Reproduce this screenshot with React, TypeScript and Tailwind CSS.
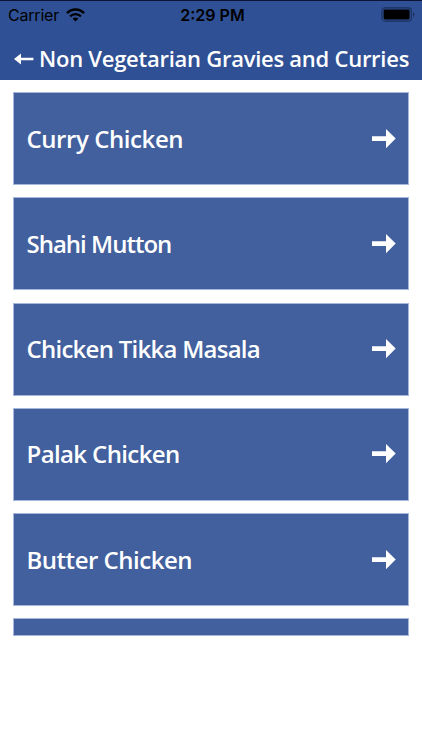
import React from 'react';

interface Dish {
  name: string;
  tracking: string;
}

const dishes: Dish[] = [
  { name: 'Curry Chicken', tracking: 'tracking-[-0.42px]' },
  { name: 'Shahi Mutton', tracking: 'tracking-[-1px]' },
  { name: 'Chicken Tikka Masala', tracking: 'tracking-[-0.74px]' },
  { name: 'Palak Chicken', tracking: 'tracking-[-0.62px]' },
  { name: 'Butter Chicken', tracking: 'tracking-[-0.48px]' },
];

const WifiIcon = () => (
  <svg className="ml-[7px] h-[14px] w-[19px]" viewBox="0 0 19 14" fill="none">
    <path d="M1 5.2C5.8 .4 13.2 .4 18 5.2" stroke="#000" strokeWidth="2.5" />
    <path d="M4.1 8.4C7.2 5.4 11.8 5.4 14.9 8.4" stroke="#000" strokeWidth="2.3" />
    <path d="M6.6 10.8C8.2 9.2 10.8 9.2 12.4 10.8L9.5 13.6Z" fill="#000" />
  </svg>
);

const BatteryIcon = () => (
  <svg className="h-[15px] w-[35px]" viewBox="0 0 35 15" fill="none">
    <rect x="0.9" y="0.9" width="29.4" height="13.2" rx="3.2" stroke="#1a2f5c" strokeWidth="1.1" />
    <rect x="2.6" y="2.6" width="26" height="9.8" rx="1.4" fill="#000" />
    <path d="M32 5.2C33.8 5.8 33.8 9.2 32 9.8Z" fill="#1a2f5c" />
  </svg>
);

const BackArrow = () => (
  <svg className="h-[12px] w-[20px]" viewBox="0 0 20 12" fill="#fff">
    <path d="M0 6L7 .4V4.7H19.4V7.3H7V11.6Z" />
  </svg>
);

const ForwardArrow = () => (
  <svg className="h-[20px] w-[24px]" viewBox="0 0 24 20" fill="#fff">
    <path d="M0 7.2H14V0L23.7 9.6L14 19.2V12H0Z" />
  </svg>
);

const App: React.FC = () => {
  return (
    <div className="h-[750px] w-[422px] overflow-hidden bg-white font-['Open_Sans','Noto_Sans',sans-serif] text-white">
      <header className="h-[80px] border-t border-[#0b1437] bg-[#2f5094]">
        <div className="grid h-[27px] grid-cols-3 items-center pl-[8px] pr-[6px] font-['Inter',sans-serif] text-[16px] leading-[20px] text-black">
          <div className="flex items-center">
            <span className="tracking-[-0.2px]">Carrier</span>
            <WifiIcon />
          </div>
          <span className="pl-[1px] text-center font-semibold">2:29 PM</span>
          <div className="flex justify-end">
            <BatteryIcon />
          </div>
        </div>
        <div className="flex h-[46px] items-center pl-[14px] pt-[15px]">
          <button type="button" aria-label="Back" className="mr-[5px] h-[12px] shrink-0">
            <BackArrow />
          </button>
          <h1 className="whitespace-nowrap pb-[2px] text-[22px] font-semibold leading-[30px] tracking-[-0.26px]">
            Non Vegetarian Gravies and Curries
          </h1>
        </div>
      </header>

      <main className="mx-[13px] mt-[12px] flex h-[544px] flex-col gap-[12.3px] overflow-hidden border-b border-[#a5b8db]">
        {dishes.map((dish) => (
          <button
            key={dish.name}
            type="button"
            className="flex h-[93px] w-full shrink-0 items-center justify-between border border-[#a5b8db] bg-[#42609d] pl-[12.5px] pr-[12px] text-left"
          >
            <span className={`whitespace-nowrap text-[24px] font-semibold leading-[32px] ${dish.tracking}`}>
              {dish.name}
            </span>
            <ForwardArrow />
          </button>
        ))}
        <div className="h-[93px] w-full shrink-0 border border-[#a5b8db] bg-[#42609d]" />
      </main>
    </div>
  );
};

export default App;
